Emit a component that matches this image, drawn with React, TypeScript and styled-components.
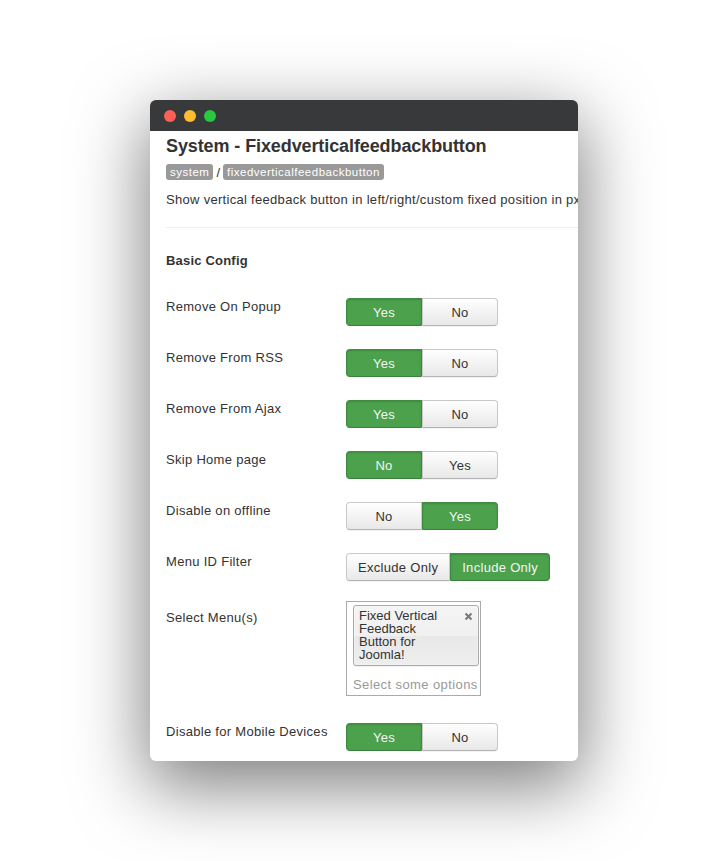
import React from "react";
import styled, { createGlobalStyle } from "styled-components";

const Global = createGlobalStyle`
  html, body { margin: 0; padding: 0; background: #ffffff; }
  body { font-family: "Liberation Sans", Arial, sans-serif; color: #333; }
`;

const Page = styled.div`
  padding: 100px 0 0 150px;
  height: 861px;
  box-sizing: border-box;
`;

const Window = styled.div`
  width: 428px;
  height: 661px;
  border-radius: 6px;
  background: #fff;
  overflow: hidden;
  box-shadow: 0 22px 70px 4px rgba(0, 0, 0, 0.5);
  display: flex;
  flex-direction: column;
`;

const TitleBar = styled.div`
  height: 31px;
  flex: none;
  background: #38393b;
  display: flex;
  align-items: center;
  gap: 8px;
  padding-left: 14px;
`;

const Light = styled.span<{ $c: string }>`
  width: 12px;
  height: 12px;
  border-radius: 50%;
  background: ${(p) => p.$c};
`;

const Content = styled.div`
  padding: 4px 0 0 16px;
  flex: 1;
  overflow: hidden;
`;

const Title = styled.h1`
  margin: 0;
  font-size: 18px;
  line-height: 22px;
  font-weight: bold;
  letter-spacing: -0.1px;
  color: #333;
  white-space: nowrap;
`;

const Crumbs = styled.div`
  margin-top: 7px;
  display: flex;
  align-items: center;
  gap: 3px;
  font-size: 13px;
  color: #333;
`;

const Badge = styled.span`
  display: inline-block;
  background: #999;
  color: #fff;
  font-size: 11.5px;
  letter-spacing: 0.5px;
  line-height: 16px;
  height: 16px;
  padding: 0 4px;
  border-radius: 3px;
`;

const Desc = styled.p`
  margin: 11px 0 0;
  font-size: 13px;
  line-height: 18px;
  letter-spacing: 0.3px;
  white-space: nowrap;
  color: #333;
`;

const Rule = styled.hr`
  margin: 18px 0 0;
  border: 0;
  border-top: 1px solid #eee;
`;

const Section = styled.h3`
  margin: 24px 0 28px;
  font-size: 13px;
  line-height: 18px;
  font-weight: bold;
  letter-spacing: 0.2px;
  color: #333;
`;

const Row = styled.div`
  display: flex;
  align-items: flex-start;
  margin-bottom: 23px;
`;

const Label = styled.div<{ $pad?: number }>`
  width: 180px;
  flex: none;
  font-size: 13px;
  line-height: 18px;
  letter-spacing: 0.3px;
  color: #333;
  padding-top: ${(p) => p.$pad ?? 0}px;
`;

const Group = styled.div`
  display: flex;
`;

const Btn = styled.div<{ $on: boolean }>`
  box-sizing: border-box;
  min-width: 76px;
  height: 28px;
  padding: 0 11px;
  display: flex;
  align-items: center;
  justify-content: center;
  font-size: 13px;
  letter-spacing: 0.3px;
  border: 1px solid ${(p) => (p.$on ? "#3f8c40" : "#c8c8c8")};
  border-bottom-color: ${(p) => (p.$on ? "#3a823b" : "#b3b3b3")};
  color: ${(p) => (p.$on ? "#f4f4f4" : "#333")};
  background: ${(p) =>
    p.$on ? "#4ca24c" : "linear-gradient(#ffffff, #e8e8e8)"};
  box-shadow: ${(p) => (p.$on ? "inset 0 1px 2px rgba(0,0,0,0.15)" : "0 1px 1px rgba(0,0,0,0.05)")};
  &:first-child { border-radius: 4px 0 0 4px; }
  &:last-child { border-radius: 0 4px 4px 0; }
`;

const Chosen = styled.div`
  box-sizing: border-box;
  width: 135px;
  height: 95px;
  margin: -3px 0 4px;
  border: 1px solid #aaa;
  background: #fff;
  padding: 3px 1px 0 6px;
`;

const Chip = styled.div`
  box-sizing: border-box;
  position: relative;
  border: 1px solid #aaa;
  border-radius: 3px;
  background: linear-gradient(#f4f4f4 0%, #f0f0f0 50%, #e8e8e8 52%, #eeeeee 100%);
  padding: 3px 0 4px 5px;
  font-size: 13px;
  line-height: 13px;
  color: #333;
  box-shadow: 0 0 2px #fff inset, 0 1px 0 rgba(0, 0, 0, 0.05);
`;

const ChipText = styled.div`
  width: 88px;
`;

const Close = styled.svg`
  position: absolute;
  top: 6px;
  right: 5px;
`;

const Placeholder = styled.div`
  margin-top: 11px;
  font-size: 13px;
  letter-spacing: 0.4px;
  color: #999;
  white-space: nowrap;
`;

type Opt = { t: string; on: boolean };
const rows: { label: string; opts: Opt[] }[] = [
  { label: "Remove On Popup", opts: [{ t: "Yes", on: true }, { t: "No", on: false }] },
  { label: "Remove From RSS", opts: [{ t: "Yes", on: true }, { t: "No", on: false }] },
  { label: "Remove From Ajax", opts: [{ t: "Yes", on: true }, { t: "No", on: false }] },
  { label: "Skip Home page", opts: [{ t: "No", on: true }, { t: "Yes", on: false }] },
  { label: "Disable on offline", opts: [{ t: "No", on: false }, { t: "Yes", on: true }] },
  { label: "Menu ID Filter", opts: [{ t: "Exclude Only", on: false }, { t: "Include Only", on: true }] },
];

const Toggle = ({ opts }: { opts: Opt[] }) => (
  <Group>
    {opts.map((o) => (
      <Btn key={o.t} $on={o.on}>
        {o.t}
      </Btn>
    ))}
  </Group>
);

export default function App() {
  return (
    <Page>
      <Global />
      <Window>
        <TitleBar>
          <Light $c="#fe5f57" />
          <Light $c="#febc2e" />
          <Light $c="#28c840" />
        </TitleBar>
        <Content>
          <Title>System - Fixedverticalfeedbackbutton</Title>
          <Crumbs>
            <Badge>system</Badge>/<Badge>fixedverticalfeedbackbutton</Badge>
          </Crumbs>
          <Desc>Show vertical feedback button in left/right/custom fixed position in px</Desc>
          <Rule />
          <Section>Basic Config</Section>
          {rows.map((r) => (
            <Row key={r.label}>
              <Label>{r.label}</Label>
              <Toggle opts={r.opts} />
            </Row>
          ))}
          <Row>
            <Label $pad={5}>Select Menu(s)</Label>
            <Chosen>
              <Chip>
                <ChipText>Fixed Vertical Feedback Button for Joomla!</ChipText>
                <Close width="9" height="9" viewBox="0 0 9 9">
                  <path d="M1.5 1.5 L7.5 7.5 M7.5 1.5 L1.5 7.5" stroke="#777" strokeWidth="2" />
                </Close>
              </Chip>
              <Placeholder>Select some options</Placeholder>
            </Chosen>
          </Row>
          <Row>
            <Label>Disable for Mobile Devices</Label>
            <Toggle opts={[{ t: "Yes", on: true }, { t: "No", on: false }]} />
          </Row>
        </Content>
      </Window>
    </Page>
  );
}
